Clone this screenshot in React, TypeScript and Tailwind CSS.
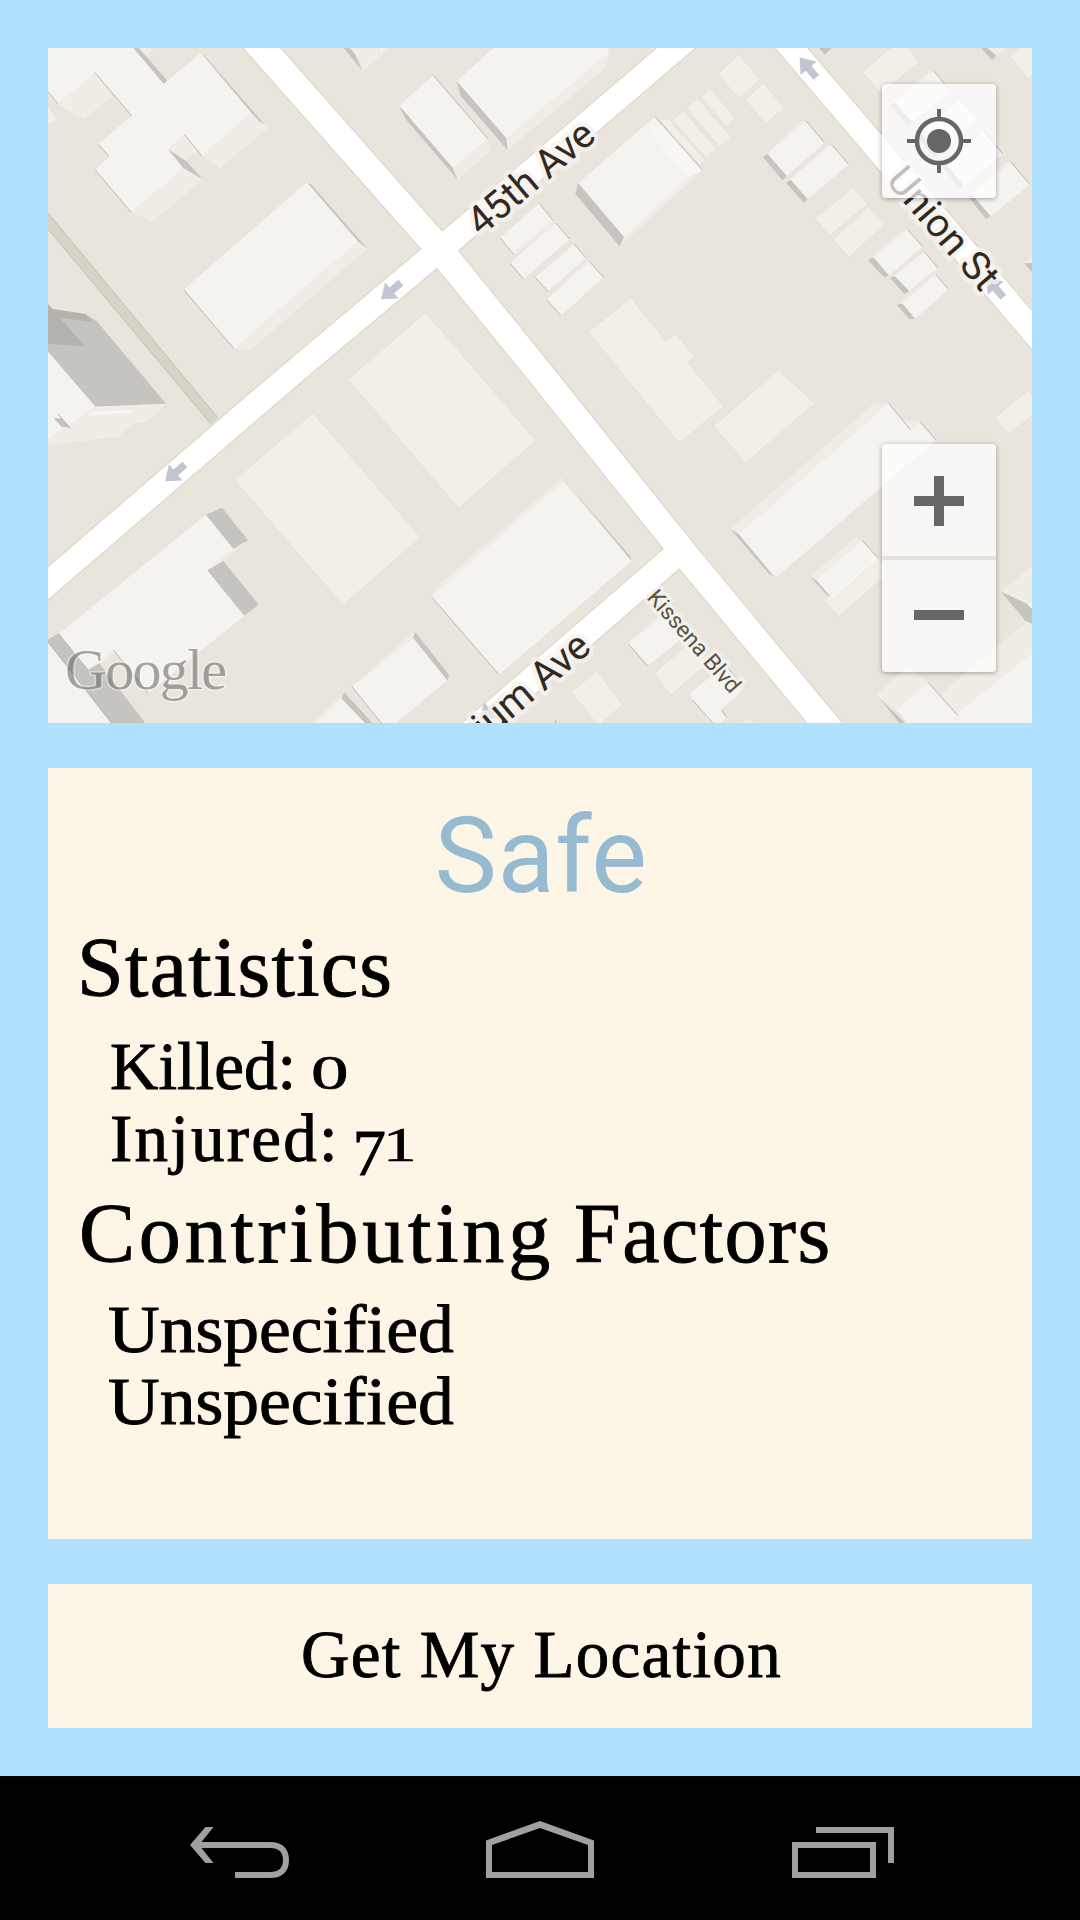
import React from "react";

type Kind = "roof" | "side" | "shade" | "flat" | "light" | "dim" | "hair";
type Shape = [Kind, string];

const STYLE: Record<Kind, string> = {
  roof: "fill-[#f4f3ef]",
  side: "fill-[#efede5]",
  shade: "fill-[#c5c4be]",
  flat: "fill-[#f1efe8] stroke-[#dddad3] stroke-[1.5]",
  light: "fill-[#f8f7f4]",
  dim: "fill-[#b3b2ad]",
  hair: "fill-none stroke-[#b9b8b2] stroke-[3]",
};

// Each tile is drawn at three units per pixel, offset by its own origin.
const TILES: { origin: string; shapes: Shape[] }[] = [
  {
    origin: "translate(40 40) scale(.33333)",
    shapes: [
      ["side", "315,47 290,20 350,20"],
      ["shade", "276,20 293,20 382,122 371,132"],
      ["side", "54,194 131,238 217,168 165,98"],
      ["side", "485,347 541,384 683,264 635,219"],
      ["side", "384,328 433,283 475,330 433,362"],
      ["side", "273,516 338,545 488,418 430,380"],
      ["roof", "20,155 54,194 165,98 275,227 175,313 207,350 165,389 273,516 430,384 384,328 433,283 485,347 635,219 483,38 371,132 276,20 20,20"],
      ["shade", "384,328 439,364 488,418 430,384"],
      ["shade", "483,38 491,44 672,252 660,246 635,219"],
      ["hair", "24,155 54,192"],
      ["hair", "165,98 275,227"],
      ["hair", "175,313 207,350"],
      ["hair", "165,389 273,516"],
      ["hair", "433,283 485,347"],
      ["flat", "20,198 53,236 20,258"],
      ["side", "582,926 628,933 981,627 955,603"],
      ["roof", "432,748 801,427 955,603 582,926"],
      ["shade", "801,427 815,435 981,625 955,605"],
      ["hair", "432,750 582,926"],
      ["shade", "24,792 36,806 136,822 170,843 378,1091 166,1100 24,935"],
      ["dim", "24,792 134,919 24,911"],
      ["dim", "24,806 136,822 157,846 24,828"],
      ["side", "24,1196 166,1100 378,1091 320,1145 280,1150 234,1190 24,1215"],
      ["roof", "24,935 166,1100 24,1196"],
      ["light", "155,1115 280,1111 280,1116 145,1127"],
      ["shade", "41,1135 65,1135 92,1164 65,1160"],
      ["hair", "54,1122 92,1166"],
      ["side", "941,47 960,60 967,92 1057,20 920,20"],
      ["shade", "908,20 926,20 945,42 967,92"],
    ],
  },
  {
    origin: "translate(380 40) scale(.33333)",
    shapes: [
      ["flat", "-5,20 35,20 -5,50"],
      ["side", "218,383 232,418 332,332 324,297"],
      ["roof", "58,197 160,106 324,297 218,383"],
      ["shade", "58,197 218,383 232,418 76,236"],
      ["hair", "160,106 324,297"],
      ["side", "379,295 383,331 678,82 687,37"],
      ["roof", "230,123 345,20 682,20 687,38 379,295"],
      ["shade", "230,123 379,295 383,331 242,167"],
      ["flat", "865,237 975,360 960,376 838,240"],
      ["flat", "877,241 911,212 1009,328 980,354"],
      ["flat", "920,204 954,176 1053,292 1020,321"],
      ["flat", "962,171 989,143 1065,233 1040,258"],
      ["side", "595,430 825,230 967,390 925,430 719,619"],
      ["roof", "595,430 825,230 957,382 732,591"],
      ["light", "815,285 847,253 967,390 925,412"],
      ["hair", "825,230 967,390"],
      ["shade", "595,430 732,591 719,619 586,462"],
      ["roof", "360,593 478,490 519,541 402,645"],
      ["side", "402,633 519,541 515,555 404,645"],
      ["roof", "390,669 527,549 569,597 431,718"],
      ["roof", "466,712 582,612 618,654 503,754"],
      ["roof", "499,779 629,666 671,712 543,827"],
      ["side", "390,669 514,552 527,549"],
      ["side", "499,779 616,666 629,666"],
      ["hair", "478,490 519,541"],
      ["hair", "360,593 402,645"],
      ["hair", "527,549 569,597"],
      ["hair", "390,669 431,718"],
      ["hair", "582,612 618,654"],
      ["hair", "466,712 503,754"],
      ["hair", "629,666 671,712"],
      ["hair", "499,779 543,827"],
      ["flat", "626,877 752,773 857,902 888,882 943,950 923,968 1030,1099 898,1209"],
      ["flat", "-96,1018 137,818 468,1202 236,1404"],
    ],
  },
  {
    origin: "translate(700 40) scale(.33333)",
    shapes: [
      ["flat", "53,102 117,44 180,118 117,176"],
      ["flat", "135,180 190,130 252,204 198,249"],
      ["shade", "357,24 396,24 374,44"],
      ["flat", "487,95 577,20 625,20 656,68 542,160"],
      ["side", "575,186 690,93 750,152 636,245"],
      ["roof", "585,190 702,93 750,152 632,248"],
      ["shade", "571,196 585,187 636,245 622,257"],
      ["roof", "655,283 780,180 832,242 700,345"],
      ["shade", "650,290 664,283 718,345 702,350"],
      ["roof", "736,375 852,272 908,342 790,440"],
      ["shade", "725,378 741,375 792,438 776,444"],
      ["side", "801,466 918,366 933,366 815,466"],
      ["roof", "815,464 933,366 990,434 872,529"],
      ["shade", "801,466 815,462 872,529 858,537"],
      ["hair", "702,93 750,152"],
      ["hair", "852,272 908,342"],
      ["hair", "933,366 990,434"],
      ["side", "880,45 890,50 925,20 860,20"],
      ["shade", "843,24 862,24 890,47 876,60"],
      ["flat", "930,50 960,20 1000,20 1000,105 984,117"],
      ["side", "189,352 302,245 317,241 202,342"],
      ["roof", "202,342 317,241 374,309 260,408"],
      ["shade", "189,352 202,341 260,408 248,421"],
      ["side", "258,428 382,317 394,313 272,420"],
      ["roof", "272,420 394,313 446,373 323,478"],
      ["shade", "258,428 272,419 323,478 312,488"],
      ["hair", "317,241 374,309"],
      ["hair", "394,313 446,373"],
      ["flat", "346,535 459,442 502,494 389,586"],
      ["flat", "400,598 505,500 556,551 447,652"],
      ["side", "504,660 608,572 622,568 520,652"],
      ["roof", "520,652 622,568 668,620 567,707"],
      ["shade", "504,660 520,652 567,707 552,712"],
      ["side", "570,714 660,643 673,636 584,708"],
      ["roof", "584,708 673,636 713,683 628,754"],
      ["shade", "570,714 584,708 628,754 613,762"],
      ["side", "591,795 695,707 708,705 606,790"],
      ["roof", "606,790 708,705 746,748 645,836"],
      ["shade", "591,795 606,790 645,836 628,837"],
      ["hair", "622,568 668,620"],
      ["hair", "673,636 713,683"],
      ["hair", "708,705 746,748"],
      ["shade", "972,670 1000,668 1000,700"],
      ["side", "972,670 1000,650 1000,668"],
    ],
  },
  {
    origin: "translate(40 380) scale(.33333)",
    shapes: [
      ["flat", "584,300 819,99 1141,472 909,676"],
      ["side", "502,571 580,506 624,481 549,545"],
      ["roof", "56,762 498,404 580,506 502,571 613,707 325,940 220,810 144,870"],
      ["side", "144,870 220,810 228,815 165,865"],
      ["shade", "498,404 546,383 624,481 580,506"],
      ["shade", "502,571 550,543 656,674 613,707"],
      ["roof", "24,785 215,1032 24,1032"],
      ["shade", "24,778 56,760 144,870 178,850 318,1032 215,1032 24,788"],
      ["hair", "220,810 325,940"],
      ["hair", "56,762 144,870"],
      ["hair", "24,785 215,1028"],
      ["side", "815,1032 905,946 920,950 850,1032"],
      ["roof", "825,1032 908,952 980,1032"],
      ["shade", "903,954 914,938 1000,1032 978,1032"],
      ["side", "936,920 1119,757 1125,770 945,920"],
      ["roof", "936,920 1120,775 1223,900 1065,1032 1026,1032"],
      ["hair", "936,920 1026,1032"],
      ["shade", "1119,773 1126,757 1227,884 1223,902"],
    ],
  },
  {
    origin: "translate(380 380) scale(.33333)",
    shapes: [
      ["side", "154,650 172,618 548,292 552,310"],
      ["roof", "154,650 550,305 755,542 357,884"],
      ["shade", "549,295 558,306 750,528 755,543"],
      ["hair", "154,650 357,884"],
      ["side", "745,792 752,780 870,680 900,710 768,805"],
      ["roof", "745,792 870,690 932,754 803,858"],
      ["hair", "745,792 803,858"],
      ["flat", "823,880 938,780 990,845 872,945"],
      ["flat", "574,935 650,874 728,974 660,1032 650,1032"],
      ["roof", "930,940 1035,855 1088,930 1022,990 1040,1013 1018,1032 995,1032 938,960"],
      ["hair", "938,960 998,1029"],
      ["shade", "1022,990 1029,992 1042,1013 1036,1010"],
      ["hair", "1035,855 1088,916"],
      ["side", "1085,1032 1110,1015 1120,1030"],
      ["hair", "525,1020 530,1032"],
    ],
  },
  {
    origin: "translate(700 380) scale(.33333)",
    shapes: [
      ["flat", "41,138 236,-30 343,70 137,249"],
      ["side", "92,446 523,70 566,70 116,463"],
      ["side", "610,120 660,123 632,150"],
      ["roof", "116,463 566,70 632,150 660,125 708,180 227,593"],
      ["shade", "92,448 116,463 225,593 206,580"],
      ["hair", "566,70 632,150"],
      ["hair", "660,125 708,180"],
      ["flat", "372,660 392,640 532,530 568,577 415,711"],
      ["side", "331,590 467,471 486,481 350,600"],
      ["roof", "346,602 486,481 533,533 393,652"],
      ["light", "393,652 525,532 531,537 395,657"],
      ["shade", "331,590 350,602 393,652 380,644"],
      ["hair", "486,481 533,533"],
      ["flat", "884,113 985,32 1000,48 1000,103 926,162"],
      ["side", "903,635 1000,553 1000,660 984,672"],
      ["side", "722,943 984,722 1000,730 1000,820 774,1007"],
      ["roof", "735,1032 1000,816 1000,1032"],
      ["shade", "903,635 980,671 1000,690 1000,733 976,722"],
      ["roof", "984,672 1000,660 1000,692"],
      ["side", "528,943 625,860 685,908 587,988 540,955"],
      ["roof", "587,988 685,908 774,1007 745,1032 626,1032"],
      ["shade", "538,954 612,1026 612,1032 600,1032"],
      ["hair", "685,908 774,1007"],
      ["side", "130,1032 150,1015 162,1029"],
    ],
  },
];

const Arrow = ({ x, y, r }: { x: number; y: number; r: number }) => (
  <path
    className="fill-[#c1c6d0]"
    transform={`translate(${x} ${y}) rotate(${r})`}
    d="M-13 0 1-10.500V-3.700H13V3.700H1V10.500Z"
  />
);

function MapCanvas() {
  return (
    <svg className="block h-full w-full" viewBox="48 48 984 675">
      <rect x="48" y="48" width="984" height="675" className="fill-[#e9e5dd]" />
      <path d="M48 213 218 418 211 424 48 229Z" className="fill-[#d5d4c8]" />
      <path d="M48 213 218 418M48 229 211 424" className="fill-none stroke-[#c3bfae]" />
      {TILES.map((tile) => (
        <g key={tile.origin} transform={tile.origin}>
          {tile.shapes.map(([kind, points], i) =>
            kind === "hair" ? (
              <polyline key={i} points={points} className={STYLE[kind]} />
            ) : (
              <polygon key={i} points={points} className={STYLE[kind]} />
            ),
          )}
        </g>
      ))}
      <g className="fill-white stroke-[#dcd7cb] stroke-[1.2]">
        <path d="M242 47 280 47 442.3 231 657.5 47 697 47 458.7 250.7 563.3 380 700 551 843.5 724 807.5 724 679.3 569 501 724 460.5 724 663 549 528 380 437 268.7 304 380 47 601 47 567.5 253 390 420.7 249Z" />
        <path d="M774 47 807 47 1033 311.5 1033 351Z" />
      </g>
      <Arrow x={391} y={291} r={-40} />
      <Arrow x={175} y={473} r={-40} />
      <Arrow x={808} y={67.5} r={50} />
      <Arrow x={995} y={287.5} r={50} />
      <Arrow x={490} y={711} r={-40} />
      <g
        fontFamily="Roboto, sans-serif"
        className="fill-[#33291f] stroke-[#f4f3ef]/80 stroke-[9] [paint-order:stroke] [stroke-linejoin:round]"
        fontSize="40"
      >
        <text transform="translate(481 237) rotate(-40.2)" fontSize="39.300">45th Ave</text>
        <text transform="translate(885 181) rotate(49.3)" fontSize="39.600">Union St</text>
        <text transform="translate(593 650) rotate(-40.4)" fontSize="39.300" textAnchor="end">Geranium Ave</text>
        <text transform="translate(646 598) rotate(48.8)" fontSize="22.600" className="fill-[#5a5142] stroke-[7]">
          Kissena Blvd
        </text>
      </g>
      <text
        x="65"
        y="689"
        fontSize="58"
        textLength="162"
        fontFamily="Liberation Serif, serif"
        className="fill-[#5f5f5a]/55 stroke-white/40 stroke-[3] [paint-order:stroke]"
      >
        Google
      </text>
    </svg>
  );
}

const panel = "bg-white/70 rounded-[4px] shadow-[0_1px_5px_rgba(0,0,0,0.35)]";

function MapPanel() {
  return (
    <section className="relative h-[675px] shrink-0 overflow-hidden">
      <MapCanvas />
      <button className={`absolute top-9 right-9 h-[114px] w-[114px] ${panel}`} aria-label="My location">
        <svg viewBox="-57 -57 114 114" className="block h-full w-full">
          <circle r="22" className="fill-none stroke-[#666] stroke-[4.5]" />
          <circle r="12" className="fill-[#666]" />
          <path d="M0-32V-23M0 32V23M-32 0H-23M32 0H23" className="stroke-[#666] stroke-4" />
        </svg>
      </button>
      <div className={`absolute top-[396px] right-9 flex h-[228px] w-[114px] flex-col ${panel}`}>
        <button className="h-28" aria-label="Zoom in">
          <svg viewBox="-57 -57 114 112" className="block h-full w-full">
            <path d="M-25 0H25M0-25V25" className="stroke-[#666] stroke-[10]" />
          </svg>
        </button>
        <div className="h-1 bg-[#d5d3cc]/60" />
        <button className="h-28" aria-label="Zoom out">
          <svg viewBox="-57 -55 114 112" className="block h-full w-full">
            <path d="M-25 0H25" className="stroke-[#666] stroke-[10]" />
          </svg>
        </button>
      </div>
    </section>
  );
}

const serif = "font-['Liberation_Serif',serif] text-black [-webkit-text-stroke:0.9px_black]";

export default function App() {
  return (
    <main className="flex h-[1920px] w-[1080px] flex-col bg-[#b0e2ff]">
      <div className="flex flex-1 flex-col p-12">
        <MapPanel />
        <section className={`mt-[45px] h-[771px] shrink-0 bg-[#fdf5e6] px-8 pt-[27px] ${serif}`}>
          <h1 className="pl-[2px] text-center font-[Roboto,sans-serif] text-[105px] leading-[123px] tracking-[0.6px] text-[#96bbd1] [-webkit-text-stroke:0]">
            Safe
          </h1>
          <h2 className="-ml-[3px] pt-px text-[84px] leading-[98px] tracking-[1.3px]">Statistics</h2>
          <div className="mt-[13px] pl-[30px] text-[67px] leading-[72px]">
            <p>
              Killed: <span className="inline-block origin-[50%_81%] scale-x-[1.12] scale-y-[.73]">0</span>
            </p>
            <p>
              <span className="tracking-[2.2px]">Injured:</span>{" "}
              <span className="-ml-[4px] inline-block translate-y-[14px] scale-y-[.98]">7</span>
              <span className="-ml-[3px] inline-block origin-[50%_81%] scale-y-[.73]">1</span>
            </p>
          </div>
          <h2 className="mt-[11px] -ml-px text-[84px] leading-[98px]">
            <span className="tracking-[3.8px]">Contributing</span>{" "}
            <span className="-ml-px tracking-[1.5px]">Factors</span>
          </h2>
          <div className="mt-[10px] pl-[28px] text-[67px] leading-[72px]">
            <p className="origin-left scale-x-[1.068]">Unspecified</p>
            <p className="origin-left scale-x-[1.068]">Unspecified</p>
          </div>
        </section>
        <button
          className={`mt-[45px] h-36 shrink-0 bg-[#fdf5e6] pb-[4px] pl-[3px] text-[67px] leading-[72px] tracking-[1.3px] ${serif}`}
        >
          Get My Location
        </button>
      </div>
      <nav className="h-36 bg-black">
        <svg viewBox="0 1776 1080 144" className="block h-full w-full fill-[#a0a0a0]">
          <path d="M205.5 1827H213.5L201.5 1842H270C282 1842 289 1848 289 1860S282 1878 270 1878H235V1872H270C279 1872 283 1868 283 1860S279 1848 270 1848H201.5L213.5 1863H205.5L190 1845Z" />
          <path fillRule="evenodd" d="M540 1821 594 1840.500V1878H486V1840.500ZM540 1828 492 1845V1872H588V1845Z" />
          <path fillRule="evenodd" d="M792 1842H876V1878H792ZM798 1848V1872H870V1848Z" />
          <path d="M816 1827H894V1863H888V1833H816Z" />
        </svg>
      </nav>
    </main>
  );
}
